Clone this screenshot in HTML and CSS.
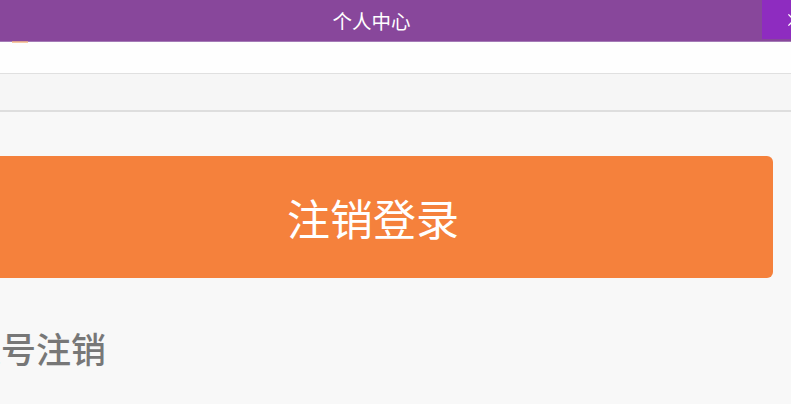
FILE: index.html
```html
<!DOCTYPE html>
<html lang="zh">
<head>
<meta charset="utf-8">
<link rel="stylesheet" href="styles.css">
</head>
<body>
<header class="topbar">
  <div class="title">个人中心</div>
  <div class="close"><svg width="20" height="20" viewBox="0 0 20 20"><path d="M3 3 L17 17 M17 3 L3 17" stroke="#fff" stroke-width="1.6" fill="none"/></svg></div>
  <span class="peek"></span>
</header>
<div class="whiteband"></div>
<div class="greyband"></div>
<main class="content">
  <button class="logout">注销登录</button>
  <h2 class="section">账号注销</h2>
</main>
</body>
</html>
```
FILE: styles.css
```css
html, body {
  margin: 0;
  padding: 0;
  background: #f8f8f8;
  overflow: hidden;
  font-family: "Noto Sans CJK SC", "Noto Sans", sans-serif;
}
.topbar {
  position: relative;
  height: 41px;
  background: #88479b;
  border-bottom: 1px solid #a47ab6;
  display: flex;
  align-items: center;
  justify-content: center;
}
.title {
  color: #fff;
  font-size: 19.5px;
  margin-left: -48px;
  line-height: 41px;
}
.close {
  position: absolute;
  top: 0;
  left: 762px;
  width: 40px;
  height: 39px;
  background: #8e2cc0;
  display: flex;
  align-items: center;
  padding-left: 24px;
  box-sizing: border-box;
}
.peek {
  position: absolute;
  left: 12px;
  top: 41px;
  width: 16px;
  height: 2px;
  background: #f4b37f;
  opacity: 0.7;
}
.whiteband {
  height: 31px;
  background: #fefefe;
  border-bottom: 1px solid #e0e0e0;
}
.greyband {
  height: 36px;
  background: #f6f6f6;
  border-bottom: 2px solid #dedede;
}
.content {
  margin-left: -27px;
  width: 800px;
  padding-top: 44px;
}
.logout {
  display: block;
  width: 800px;
  height: 122px;
  border: none;
  border-radius: 6px;
  background: #f5813c;
  color: #fff;
  font-family: "Noto Sans CJK SC", "Noto Sans", sans-serif;
  font-size: 43px;
  padding: 0;
  margin: 0;
  line-height: 1;
}
.section {
  margin: 49px 0 0 -7px;
  font-size: 35px;
  font-weight: 500;
  color: #777;
  line-height: 1.2;
}
```
